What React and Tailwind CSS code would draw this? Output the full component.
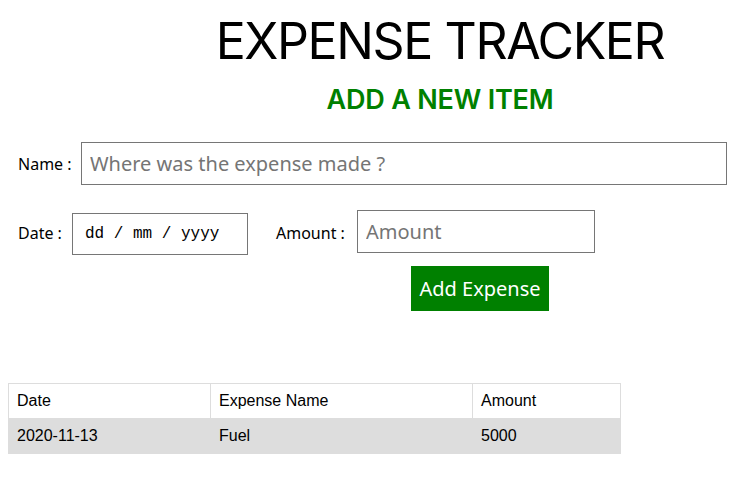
import React from "react";

export default function App() {
  return (
    <div className="w-[732px] h-[481px] bg-white text-black overflow-hidden">
      <div className="pl-[148px] text-center pt-[14px]">
        <h1 className="text-[50px] leading-[54px] font-normal font-['Inter',sans-serif] tracking-[-1.4px]">
          EXPENSE TRACKER
        </h1>
        <h2 className="mt-[16px] text-[27px] leading-[32px] font-semibold text-[#008000] font-['Inter',sans-serif] tracking-[-0.2px]">
          ADD A NEW ITEM
        </h2>
      </div>

      <div className="font-['Noto_Sans',sans-serif] mt-[26px]">
        <div className="flex items-center pl-[18px] h-[43px]">
          <span className="text-[16px] w-[63px]">Name :</span>
          <input
            className="w-[646px] h-[43px] border border-[#767676] px-[8px] text-[20px] placeholder:text-[#757575] outline-none"
            placeholder="Where was the expense made ?"
          />
        </div>

        <div className="flex items-center pl-[18px] mt-[25px] h-[45px]">
          <span className="text-[16px] w-[54px]">Date :</span>
          <div className="w-[176px] h-[42px] border border-[#767676] flex items-center pl-[12px] font-['Liberation_Mono',monospace] text-[16px] text-black mt-[3px]">
            dd / mm / yyyy
          </div>
          <span className="text-[16px] ml-[28px] w-[81px]">Amount :</span>
          <input
            className="w-[238px] h-[43px] border border-[#767676] px-[8px] text-[20px] placeholder:text-[#757575] outline-none -mt-[3px]"
            placeholder="Amount"
          />
        </div>

        <div className="pl-[411px] mt-[11px]">
          <button className="w-[138px] h-[45px] bg-[#008000] text-white text-[20px]">
            Add Expense
          </button>
        </div>
      </div>

      <table className="ml-[8px] mt-[72px] border-collapse font-['Liberation_Sans',sans-serif] text-[16px]">
        <thead>
          <tr className="h-[35px]">
            <td className="w-[202px] border border-[#dddddd] px-[8px]">Date</td>
            <td className="w-[262px] border border-[#dddddd] px-[8px]">Expense Name</td>
            <td className="w-[148px] border border-[#dddddd] px-[8px]">Amount</td>
          </tr>
        </thead>
        <tbody>
          <tr className="h-[35px] bg-[#dddddd]">
            <td className="border border-[#dddddd] px-[8px]">2020-11-13</td>
            <td className="border border-[#dddddd] px-[8px]">Fuel</td>
            <td className="border border-[#dddddd] px-[8px]">5000</td>
          </tr>
        </tbody>
      </table>
    </div>
  );
}
